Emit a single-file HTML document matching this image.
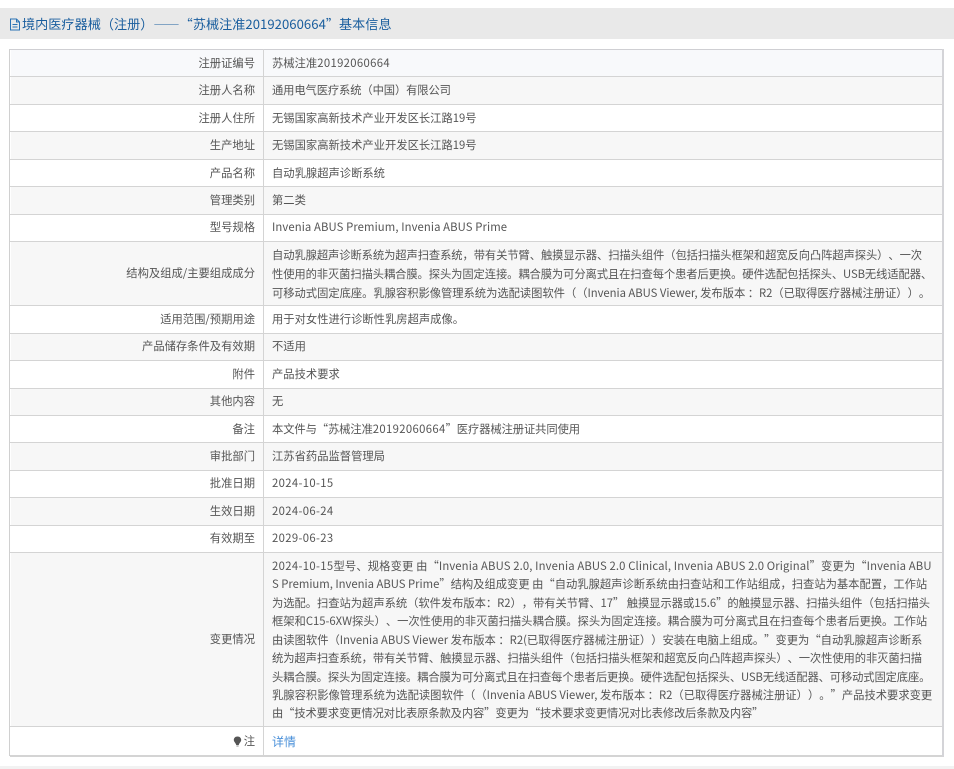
<!DOCTYPE html>
<html lang="zh-CN"><head><meta charset="utf-8"><title>基本信息</title>
<style>
html,body{margin:0;padding:0;background:#fff}
body{width:954px;height:769px;overflow:hidden;position:relative;font-family:"Liberation Sans","Noto Sans CJK SC",sans-serif;font-size:11.3px;color:#555;text-spacing-trim:space-all}
.a{position:absolute}
.t{font-family:"Noto Sans CJK SC",sans-serif;white-space:pre;line-height:18px;height:18px}
.l{right:699px;text-align:right}
.v{left:272px}
.n{letter-spacing:.35px}
.row{position:absolute;left:11px;width:931px}
.g{background:#f7f7f7}
.h{background:#e9e9e9;left:0;top:8px;width:954px;height:31px}
.title{left:10px;top:15px;font-size:13.1px;letter-spacing:.05px;color:#1a5e9e;font-family:"Noto Sans CJK SC",sans-serif;white-space:pre;line-height:18px}
.hl{position:absolute;left:10px;width:932px;height:1px;background:#d4d4d4}
</style></head><body>
<div class="a h"></div>
<svg class="a" style="left:9px;top:18px" width="12" height="13" viewBox="0 0 12 13"><path d="M1.5 1H7.5L10.5 4V12H1.5ZM7.5 1V4H10.5M3.5 6.5H8.5M3.5 9H8.5" fill="none" stroke="#2a72b5" stroke-width="1"/></svg>
<div class="a title" style="left:22px">境内医疗器械（注册）——“苏械注准20192060664”基本信息</div>

<div class="row" style="top:50px;height:26px;background:#f8f9fb"></div>
<div class="row g" style="top:77px;height:27px"></div>
<div class="row g" style="top:132px;height:27px"></div>
<div class="row g" style="top:187px;height:27px"></div>
<div class="row g" style="top:242px;height:63px"></div>
<div class="row g" style="top:333px;height:27px"></div>
<div class="row g" style="top:388px;height:27px"></div>
<div class="row g" style="top:443px;height:27px"></div>
<div class="row g" style="top:498px;height:27px"></div>
<div class="row g" style="top:553px;height:173px"></div>

<div class="hl" style="top:49px;background:#cfcfd3"></div>
<div class="hl" style="top:76px"></div><div class="hl" style="top:104px"></div><div class="hl" style="top:131px"></div><div class="hl" style="top:159px"></div><div class="hl" style="top:186px"></div><div class="hl" style="top:214px"></div><div class="hl" style="top:241px"></div><div class="hl" style="top:305px"></div><div class="hl" style="top:333px"></div><div class="hl" style="top:360px"></div><div class="hl" style="top:388px"></div><div class="hl" style="top:415px"></div><div class="hl" style="top:442px"></div><div class="hl" style="top:470px"></div><div class="hl" style="top:497px"></div><div class="hl" style="top:525px"></div><div class="hl" style="top:552px"></div><div class="hl" style="top:726px"></div>
<div class="hl" style="top:755px;height:2px"></div>
<div class="a" style="left:9px;top:49px;width:1px;height:707px;background:#d0d0d0"></div>
<div class="a" style="left:263px;top:49px;width:1px;height:707px;background:#d4d4d4"></div>
<div class="a" style="left:942px;top:49px;width:2px;height:708px;background:#d4d4d8"></div>
<div class="a" style="left:0;top:766px;width:954px;height:3px;background:#f2f2f2"></div>

<div class="a t l" style="top:54px">注册证编号</div><div class="a t v" style="top:54px">苏械注准<span class="n">20192060664</span></div>
<div class="a t l" style="top:81px">注册人名称</div><div class="a t v" style="top:81px;letter-spacing:-.12px">通用电气医疗系统（中国）有限公司</div>
<div class="a t l" style="top:109px">注册人住所</div><div class="a t v" style="top:109px">无锡国家高新技术产业开发区长江路19号</div>
<div class="a t l" style="top:136px">生产地址</div><div class="a t v" style="top:136px">无锡国家高新技术产业开发区长江路19号</div>
<div class="a t l" style="top:164px">产品名称</div><div class="a t v" style="top:164px">自动乳腺超声诊断系统</div>
<div class="a t l" style="top:191px">管理类别</div><div class="a t v" style="top:191px">第二类</div>
<div class="a t l" style="top:218px">型号规格</div><div class="a t v" style="top:218px;letter-spacing:.1px">Invenia ABUS Premium, Invenia ABUS Prime</div>
<div class="a t l" style="top:264px">结构及组成/主要组成成分</div>
<div class="a t v" style="top:246px;letter-spacing:-.09px">自动乳腺超声诊断系统为超声扫查系统，带有关节臂、触摸显示器、扫描头组件（包括扫描头框架和超宽反向凸阵超声探头）、一次</div>
<div class="a t v" style="top:265px;letter-spacing:-.1px">性使用的非灭菌扫描头耦合膜。探头为固定连接。耦合膜为可分离式且在扫查每个患者后更换。硬件选配包括探头、USB无线适配器、</div>
<div class="a t v" style="top:284px;letter-spacing:-.03px">可移动式固定底座。乳腺容积影像管理系统为选配读图软件（（Invenia ABUS Viewer, 发布版本 ：R2（已取得医疗器械注册证））。</div>
<div class="a t l" style="top:310px">适用范围/预期用途</div><div class="a t v" style="top:310px">用于对女性进行诊断性乳房超声成像。</div>
<div class="a t l" style="top:337px">产品储存条件及有效期</div><div class="a t v" style="top:337px">不适用</div>
<div class="a t l" style="top:365px">附件</div><div class="a t v" style="top:365px">产品技术要求</div>
<div class="a t l" style="top:392px">其他内容</div><div class="a t v" style="top:392px">无</div>
<div class="a t l" style="top:420px">备注</div><div class="a t v" style="top:420px;letter-spacing:-.1px">本文件与“苏械注准<span class="n">20192060664</span>”医疗器械注册证共同使用</div>
<div class="a t l" style="top:447px">审批部门</div><div class="a t v" style="top:447px">江苏省药品监督管理局</div>
<div class="a t l" style="top:474px">批准日期</div><div class="a t v n" style="top:474px">2024-10-15</div>
<div class="a t l" style="top:502px">生效日期</div><div class="a t v n" style="top:502px">2024-06-24</div>
<div class="a t l" style="top:529px">有效期至</div><div class="a t v n" style="top:529px">2029-06-23</div>
<div class="a t l" style="top:630px">变更情况</div>
<div class="a t v" style="top:557px;letter-spacing:.12px"><span class="n">2024-10-15</span>型号、规格变更 由“Invenia ABUS 2.0, Invenia ABUS 2.0 Clinical, Invenia ABUS 2.0 Original”变更为“Invenia ABU</div>
<div class="a t v" style="top:575px;letter-spacing:-.01px">S Premium, Invenia ABUS Prime”结构及组成变更 由“自动乳腺超声诊断系统由扫查站和工作站组成，扫查站为基本配置，工作站</div>
<div class="a t v" style="top:594px;letter-spacing:-.04px">为选配。扫查站为超声系统（软件发布版本：R2），带有关节臂、17” 触摸显示器或15.6”的触摸显示器、扫描头组件（包括扫描头</div>
<div class="a t v" style="top:612px;letter-spacing:-.02px">框架和C15-6XW探头）、一次性使用的非灭菌扫描头耦合膜。探头为固定连接。耦合膜为可分离式且在扫查每个患者后更换。工作站</div>
<div class="a t v" style="top:631px">由读图软件（Invenia ABUS Viewer 发布版本 ：R2(已取得医疗器械注册证））安装在电脑上组成。”变更为“自动乳腺超声诊断系</div>
<div class="a t v" style="top:649px;letter-spacing:-.09px">统为超声扫查系统，带有关节臂、触摸显示器、扫描头组件（包括扫描头框架和超宽反向凸阵超声探头）、一次性使用的非灭菌扫描</div>
<div class="a t v" style="top:668px;letter-spacing:-.13px">头耦合膜。探头为固定连接。耦合膜为可分离式且在扫查每个患者后更换。硬件选配包括探头、USB无线适配器、可移动式固定底座。</div>
<div class="a t v" style="top:686px">乳腺容积影像管理系统为选配读图软件（（Invenia ABUS Viewer, 发布版本 ：R2（已取得医疗器械注册证））。”产品技术要求变更</div>
<div class="a t v" style="top:704px;letter-spacing:-.13px">由“技术要求变更情况对比表原条款及内容”变更为“技术要求变更情况对比表修改后条款及内容”</div>
<div class="a t l" style="top:732px">注</div>
<svg class="a" style="left:233px;top:736px" width="9" height="11" viewBox="0 0 9 11"><path d="M4.5 .5C2 .5 .8 2.2 .8 4C.8 5.8 2.8 7 3.2 9H5.8C6.2 7 8.2 5.8 8.2 4C8.2 2.2 7 .5 4.5 .5Z" fill="#555"/><path d="M3.4 10H5.6" stroke="#888" stroke-width="1"/></svg>
<div class="a t v" style="top:733px;color:#4a90d9;font-size:12px">详情</div>
</body></html>
